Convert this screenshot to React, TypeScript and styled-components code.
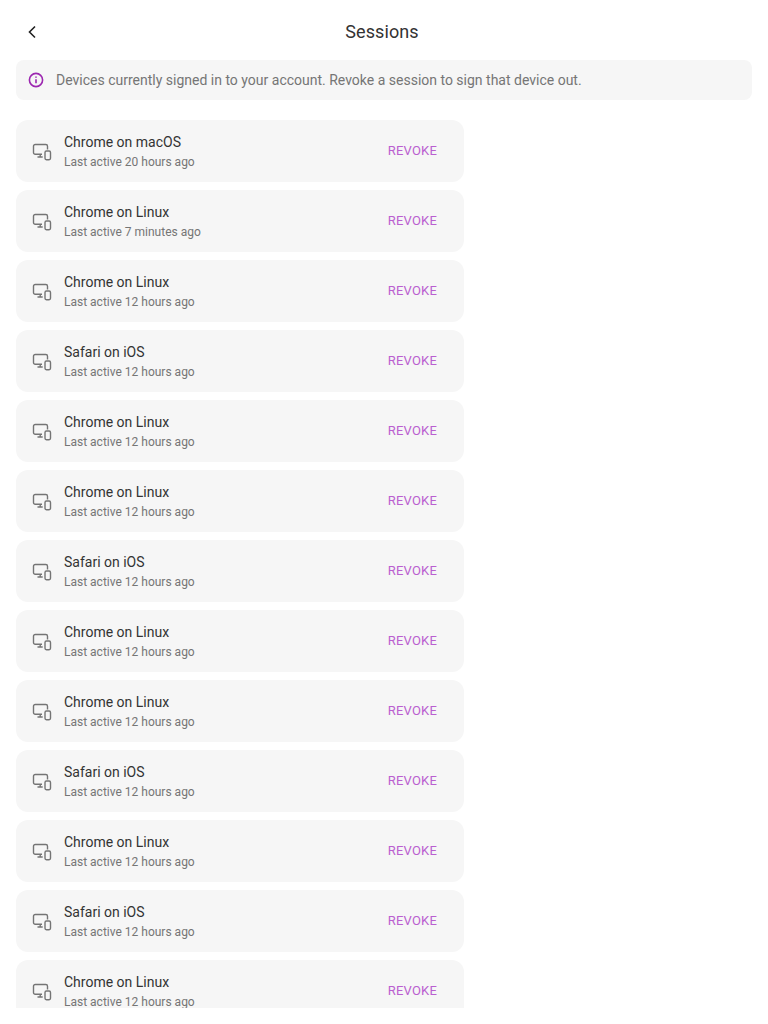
import * as React from 'react'
import styled, { createGlobalStyle } from 'styled-components'

const GlobalStyle = createGlobalStyle`
  html, body {
    margin: 0;
    padding: 0;
    background: #fff;
    font-family: Roboto, 'Liberation Sans', sans-serif;
  }
`

const Page = styled.div`
  height: 1008px;
  overflow: hidden;
  display: flex;
  flex-direction: column;
`

const Header = styled.header`
  height: 60px;
  flex-shrink: 0;
  position: relative;
  display: flex;
  align-items: center;
  justify-content: center;
  padding: 2px 4px 0 0;
  box-sizing: border-box;
`

const BackButton = styled.button`
  position: absolute;
  left: 20px;
  top: 20px;
  width: 24px;
  height: 24px;
  padding: 0;
  border: none;
  background: none;
  color: #212121;
  display: flex;
  align-items: center;
  justify-content: center;
`

const Title = styled.h1`
  margin: 0;
  font-size: 18px;
  font-weight: 400;
  color: #333;
  letter-spacing: 0.1px;
`

const Content = styled.main`
  padding: 0 16px;
  display: flex;
  flex-direction: column;
`

const Banner = styled.div`
  height: 40px;
  border-radius: 8px;
  background: #f6f6f6;
  display: flex;
  align-items: center;
  gap: 12px;
  padding: 0 12px;
  margin-bottom: 20px;
  font-size: 14px;
  color: #757575;
`

const InfoIcon = styled.svg`
  width: 16px;
  height: 16px;
  flex-shrink: 0;
  fill: none;
  stroke: #9c27b0;
  stroke-width: 1.6;
`

const SessionList = styled.ul`
  list-style: none;
  margin: 0;
  padding: 0;
  width: 448px;
  display: flex;
  flex-direction: column;
  gap: 8px;
`

const SessionCard = styled.li`
  height: 62px;
  flex-shrink: 0;
  border-radius: 12px;
  background: #f6f6f6;
  display: flex;
  align-items: center;
  padding: 0 16px;
`

const DeviceIcon = styled.svg`
  width: 20px;
  height: 20px;
  flex-shrink: 0;
  margin-right: 12px;
  fill: none;
  stroke: #757575;
  stroke-width: 1.4;
`

const Details = styled.div`
  flex: 1;
  min-width: 0;
  padding-top: 2px;
`

const DeviceName = styled.div`
  font-size: 14px;
  line-height: 20px;
  color: #333;
`

const LastActive = styled.div`
  font-size: 12px;
  line-height: 20px;
  color: #757575;
`

const RevokeButton = styled.button`
  border: none;
  background: none;
  padding: 0 11px;
  margin-bottom: 2px;
  font-family: inherit;
  font-size: 13px;
  font-weight: 400;
  letter-spacing: 0.2px;
  color: #ba5fd0;
`

const sessions = [
  ['Chrome on macOS', '20 hours'],
  ['Chrome on Linux', '7 minutes'],
  ['Chrome on Linux', '12 hours'],
  ['Safari on iOS', '12 hours'],
  ['Chrome on Linux', '12 hours'],
  ['Chrome on Linux', '12 hours'],
  ['Safari on iOS', '12 hours'],
  ['Chrome on Linux', '12 hours'],
  ['Chrome on Linux', '12 hours'],
  ['Safari on iOS', '12 hours'],
  ['Chrome on Linux', '12 hours'],
  ['Safari on iOS', '12 hours'],
  ['Chrome on Linux', '12 hours'],
]

export default function App() {
  return (
    <Page>
      <GlobalStyle />
      <Header>
        <BackButton aria-label="Back">
          <svg width="24" height="24" viewBox="0 0 24 24" fill="none" stroke="currentColor" strokeWidth="1.6">
            <path d="M15 6.5 9.5 12l5.5 5.5" />
          </svg>
        </BackButton>
        <Title>Sessions</Title>
      </Header>
      <Content>
        <Banner>
          <InfoIcon viewBox="0 0 16 16">
            <circle cx="8" cy="8" r="6.6" />
            <path d="M8 7.2v4" />
            <path d="M8 4.4v1.4" />
          </InfoIcon>
          Devices currently signed in to your account. Revoke a session to sign that device out.
        </Banner>
        <SessionList>
          {sessions.map(([name, ago], i) => (
            <SessionCard key={i}>
              <DeviceIcon viewBox="0 0 20 20">
                <path d="M10 13.2H3.2A1.7 1.7 0 0 1 1.5 11.5V5.2A1.7 1.7 0 0 1 3.2 3.5h10.6a1.7 1.7 0 0 1 1.7 1.7V8.5" />
                <path d="M8.2 13.2v2.8M5.5 16h5.2" />
                <rect x="13" y="10" width="5.5" height="8.7" rx="1.4" />
              </DeviceIcon>
              <Details>
                <DeviceName>{name}</DeviceName>
                <LastActive>Last active {ago} ago</LastActive>
              </Details>
              <RevokeButton>REVOKE</RevokeButton>
            </SessionCard>
          ))}
        </SessionList>
      </Content>
    </Page>
  )
}
